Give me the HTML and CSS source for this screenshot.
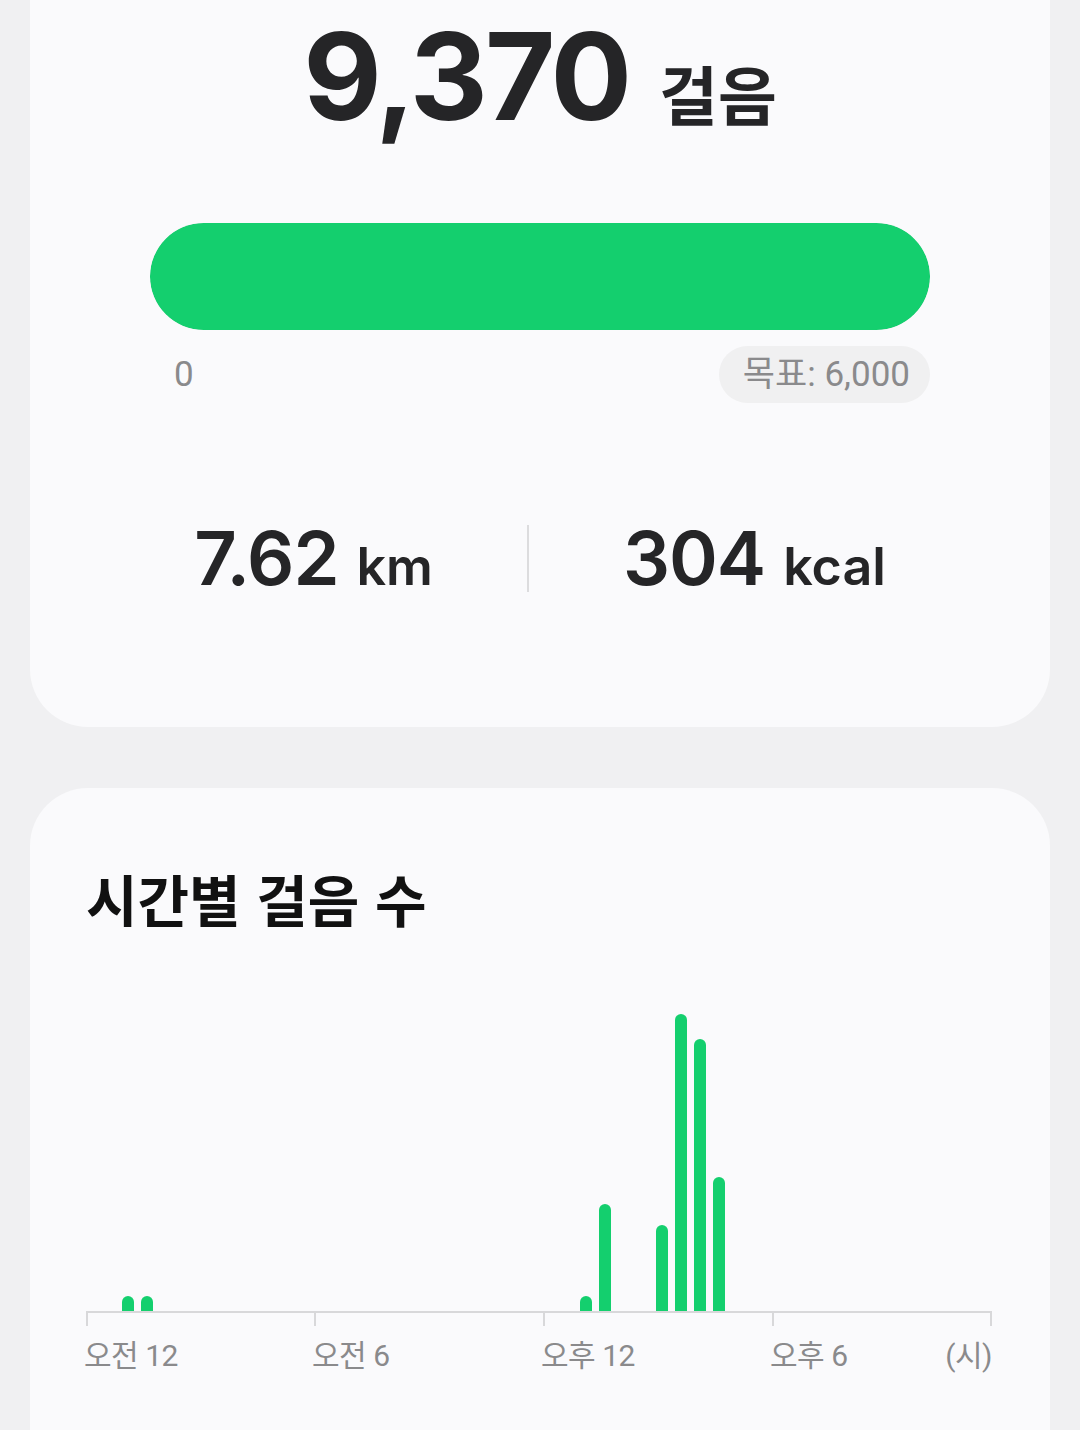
FILE: index.html
```html
<!DOCTYPE html>
<html lang="ko">
<head>
  <meta charset="UTF-8">
  <title>걸음 수</title>
  <link rel="stylesheet" href="styles.css">
</head>
<body>

  <div class="screen">

    <div class="card summary-card">
      <div class="steps-total">
        <span class="steps-number">9,370</span>
        <span class="steps-unit">걸음</span>
      </div>

      <div class="goal-bar">
        <div class="goal-fill"></div>
      </div>

      <div class="goal-labels">
        <span class="goal-zero">0</span>
        <span class="goal-pill">목표: 6,000</span>
      </div>

      <div class="stats">
        <div class="stat">
          <span class="stat-value">7.62</span>
          <span class="stat-unit">km</span>
        </div>
        <div class="stat-divider"></div>
        <div class="stat">
          <span class="stat-value">304</span>
          <span class="stat-unit">kcal</span>
        </div>
      </div>
    </div>

    <div class="card chart-card">
      <h2 class="chart-title">시간별 걸음 수</h2>

      <div class="chart">
        <div class="plot">
          <div class="bar" style="left: 36px; height: 15px;"></div>
          <div class="bar" style="left: 55px; height: 15px;"></div>
          <div class="bar" style="left: 494px; height: 15px;"></div>
          <div class="bar" style="left: 513px; height: 107px;"></div>
          <div class="bar" style="left: 570px; height: 86px;"></div>
          <div class="bar" style="left: 589px; height: 297px;"></div>
          <div class="bar" style="left: 608px; height: 272px;"></div>
          <div class="bar" style="left: 627px; height: 134px;"></div>
        </div>

        <div class="axis-ticks">
          <div class="tick"></div>
          <div class="tick"></div>
          <div class="tick"></div>
          <div class="tick last"></div>
        </div>

        <div class="axis-labels">
          <span>오전 12</span>
          <span>오전 6</span>
          <span>오후 12</span>
          <span class="last-cell">
            <span>오후 6</span>
            <span>(시)</span>
          </span>
        </div>
      </div>
    </div>

  </div>

</body>
</html>
```

FILE: styles.css
```css
body {
  margin: 0;
  padding: 0;
  background-color: #f0f0f2;
  font-family: Inter, "Noto Sans CJK KR", sans-serif;
  color: #252527;
  height: 1430px;
  overflow: hidden;
}

.screen {
  padding: 0 30px;
}

.card {
  background-color: #fafafc;
  border-radius: 58px;
}

/* summary */

.summary-card {
  margin-top: -60px;
  padding: 60px 0 0;
  height: 787px;
  box-sizing: border-box;
}

.steps-total {
  display: flex;
  justify-content: center;
  align-items: baseline;
  gap: 30px;
  height: 160px;
  margin-top: 16px;
}

.steps-number {
  font-size: 121px;
  font-weight: 700;
  letter-spacing: -3px;
  line-height: 1;
}

.steps-unit {
  font-family: "Noto Sans CJK KR", sans-serif;
  font-size: 64px;
  font-weight: 700;
}

.goal-bar {
  width: 780px;
  height: 107px;
  margin: 47px auto 0;
  background-color: #e6e6e8;
  border-radius: 54px;
  overflow: hidden;
}

.goal-fill {
  width: 100%;
  height: 100%;
  background-color: #14cf6e;
  border-radius: 54px;
}

.goal-labels {
  width: 780px;
  margin: 16px auto 0;
  display: flex;
  justify-content: space-between;
  align-items: center;
  color: #8a8a8c;
  font-family: Roboto, "Noto Sans CJK KR", sans-serif;
  font-size: 35px;
}

.goal-zero {
  padding-left: 24px;
}

.goal-pill {
  background-color: #f0f0f1;
  border-radius: 29px;
  padding: 6px 20px 6px 24px;
  line-height: 45px;
}

.stats {
  display: flex;
  justify-content: center;
  align-items: center;
  gap: 94px;
  margin-top: 110px;
}

.stat {
  display: flex;
  align-items: baseline;
  gap: 18px;
}

.stat-value {
  font-size: 74px;
  font-weight: 600;
  letter-spacing: -1px;
}

.stat-unit {
  font-size: 52px;
  font-weight: 600;
}

.stat-divider {
  width: 2px;
  height: 67px;
  background-color: #dcdcde;
}

/* chart */

.chart-card {
  margin-top: 61px;
  padding: 70px 56px 60px;
  height: 700px;
}

.chart-title {
  margin: 0;
  font-family: "Noto Sans CJK KR", sans-serif;
  font-size: 56px;
  font-weight: 700;
  color: #111;
  line-height: 80px;
}

.chart {
  width: 906px;
}

.plot {
  position: relative;
  height: 311px;
  margin-top: 62px;
  border-bottom: 2px solid #d8d8da;
}

.bar {
  position: absolute;
  bottom: 0;
  width: 12px;
  background-color: #14cf6e;
  border-radius: 6px 6px 0 0;
}

.axis-ticks {
  display: grid;
  grid-template-columns: 228px 229px 229px 1fr;
  height: 13px;
}

.tick {
  border-left: 2px solid #d8d8da;
}

.tick.last {
  border-right: 2px solid #d8d8da;
}

.axis-labels {
  display: grid;
  grid-template-columns: 228px 229px 229px 1fr;
  margin-top: 10px;
  margin-left: -2px;
  font-family: Roboto, "Noto Sans CJK KR", sans-serif;
  font-size: 30px;
  letter-spacing: -0.5px;
  color: #8a8a8c;
  line-height: 40px;
}

.last-cell {
  display: flex;
  justify-content: space-between;
}
```
